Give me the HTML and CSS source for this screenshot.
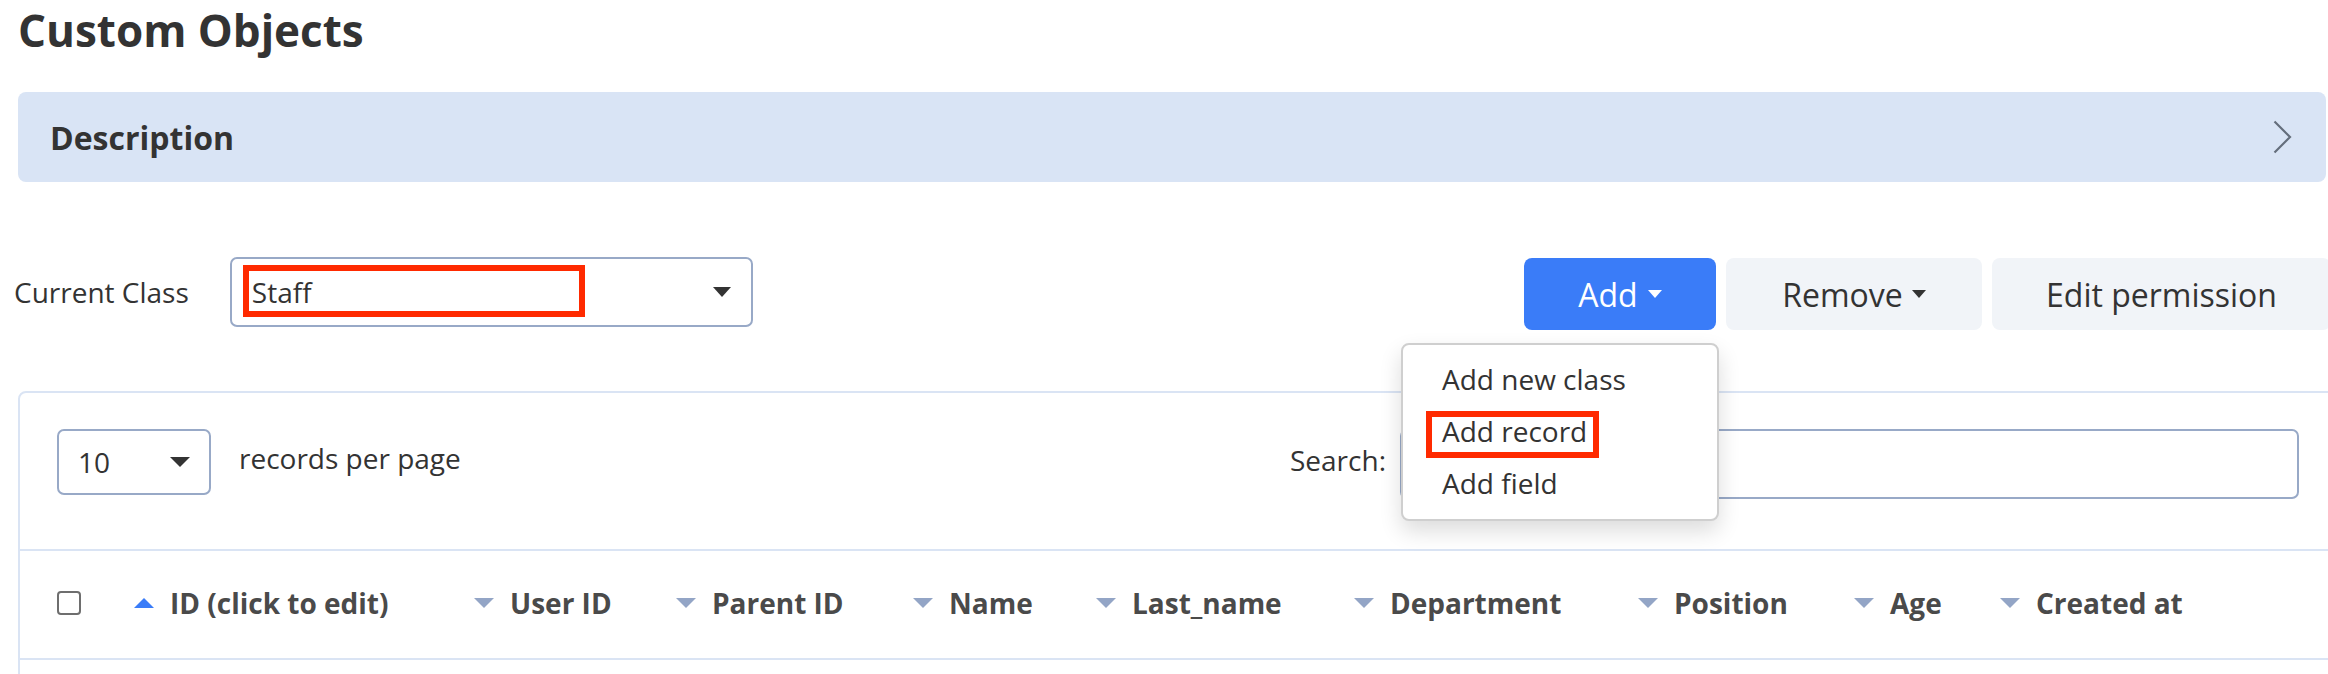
FILE: index.html
```html
<!DOCTYPE html>
<html lang="en">
<head>
<meta charset="utf-8">
<title>Custom Objects</title>
<link rel="stylesheet" href="styles.css">
</head>
<body>
<div class="page">
  <h1 class="title">Custom Objects</h1>

  <div class="desc-bar">
    <span class="desc-title">Description</span>
    <svg class="chev" width="19" height="34" viewBox="0 0 19 34"><polyline points="1.5,1.5 17,17 1.5,32.5" fill="none" stroke="#646e7c" stroke-width="2.2"/></svg>
  </div>

  <div class="toolbar">
    <div class="class-picker">
      <span class="label label-class">Current Class</span>
      <div class="select select-class">
        <span class="select-value">Staff</span>
        <span class="tri tri-class"></span>
        <span class="annot annot-staff"></span>
      </div>
    </div>
    <div class="actions">
      <div class="dropdown">
        <button class="btn btn-primary btn-add">Add<span class="btn-caret caret-light"></span></button>
        <div class="menu">
          <div class="menu-item">Add new class</div>
          <div class="menu-item">Add record<span class="annot annot-record"></span></div>
          <div class="menu-item">Add field</div>
        </div>
      </div>
      <button class="btn btn-light btn-remove">Remove<span class="btn-caret caret-dark"></span></button>
      <button class="btn btn-light btn-edit">Edit permission</button>
    </div>
  </div>

  <div class="card">
    <div class="card-controls">
      <div class="length">
        <div class="select select-len">
          <span class="select-value">10</span>
          <span class="tri tri-len"></span>
        </div>
        <span class="label label-len">records per page</span>
      </div>
      <div class="search">
        <span class="label label-search">Search:</span>
        <div class="search-input"></div>
      </div>
    </div>
    <div class="thead">
      <div class="th th-check"><span class="checkbox"></span></div>
      <div class="th"><span class="sort sort-up"></span>ID (click to edit)</div>
      <div class="th"><span class="sort"></span>User ID</div>
      <div class="th"><span class="sort"></span>Parent ID</div>
      <div class="th"><span class="sort"></span>Name</div>
      <div class="th"><span class="sort"></span>Last_name</div>
      <div class="th"><span class="sort"></span>Department</div>
      <div class="th"><span class="sort"></span>Position</div>
      <div class="th"><span class="sort"></span>Age</div>
      <div class="th"><span class="sort"></span>Created at</div>
    </div>
    <div class="tbody"></div>
  </div>
</div>
</body>
</html>
```

FILE: styles.css
```css
* { box-sizing: border-box; }

html, body {
  margin: 0;
  padding: 0;
  background: #ffffff;
  overflow: hidden;
}

body {
  font-family: "Open Sans", "Noto Sans", "Liberation Sans", sans-serif;
  color: #333333;
}

.page {
  width: 2337px;
  padding-left: 18px;
}

.title {
  margin: 0;
  font-size: 44px;
  line-height: 60px;
  font-weight: 700;
  color: #333333;
}

.desc-bar {
  margin-top: 32px;
  margin-right: 11px;
  height: 90px;
  background: #d9e4f5;
  border-radius: 8px;
  display: flex;
  align-items: center;
  justify-content: space-between;
  padding: 0 34px 0 32px;
}

.desc-title {
  font-size: 32px;
  font-weight: 700;
  color: #333333;
}

.chev { display: block; }

.toolbar {
  margin-top: 75px;
  display: flex;
  justify-content: space-between;
  align-items: flex-start;
}

.class-picker {
  display: flex;
  align-items: center;
  height: 70px;
}

.label {
  font-size: 28px;
  color: #333333;
  white-space: nowrap;
}

.label-class {
  margin-left: -4px;
  margin-right: 41px;
}

.select {
  position: relative;
  display: flex;
  align-items: center;
  justify-content: space-between;
  border: 2px solid #98a9c7;
  border-radius: 7px;
  background: #ffffff;
  font-size: 28px;
  color: #333333;
}

.select-class {
  width: 523px;
  height: 70px;
  padding: 0 20px 0 20px;
}

.select-len {
  width: 154px;
  height: 66px;
  padding: 0 19px 0 19px;
}

.tri {
  width: 0;
  height: 0;
  border-left: 9px solid transparent;
  border-right: 9px solid transparent;
  border-top: 10px solid #333333;
}

.tri-len {
  border-left-width: 10px;
  border-right-width: 10px;
}

.annot {
  position: absolute;
  border: 6px solid #ff2a00;
  pointer-events: none;
}

.annot-staff {
  left: 11px;
  top: 6px;
  width: 342px;
  height: 52px;
}

.actions {
  display: flex;
  gap: 10px;
  margin-top: 1px;
  margin-right: 6px;
}

.dropdown {
  position: relative;
}

.btn {
  height: 72px;
  padding: 0;
  border: none;
  border-radius: 8px;
  font-family: "Open Sans", "Noto Sans", "Liberation Sans", sans-serif;
  font-size: 32px;
  display: flex;
  align-items: center;
  justify-content: center;
  white-space: nowrap;
}

.btn-add { width: 192px; }
.btn-remove { width: 256px; }
.btn-edit { width: 339px; }

.btn-primary {
  background: #3a7cf8;
  color: #ffffff;
}

.btn-light {
  background: #f1f4f8;
  color: #333333;
}

.btn-caret {
  margin-left: 10px;
  width: 0;
  height: 0;
  border-left: 7.5px solid transparent;
  border-right: 7.5px solid transparent;
  border-top: 8px solid #ffffff;
}

.caret-dark { border-top-color: #333333; margin-left: 9px; }

.menu {
  position: absolute;
  top: calc(100% + 13px);
  right: -3px;
  width: 318px;
  padding: 8px 0 10px 0;
  border: 2px solid #cfcfcf;
  border-radius: 8px;
  background: #ffffff;
  box-shadow: 0 10px 22px rgba(0, 0, 0, 0.14);
  z-index: 10;
}

.menu-item {
  position: relative;
  height: 52px;
  line-height: 52px;
  padding-left: 39px;
  font-size: 28px;
  color: #333333;
  white-space: nowrap;
}

.annot-record {
  left: 23px;
  top: 6px;
  width: 173px;
  height: 47px;
}

.card {
  margin-top: 61px;
  border: 2px solid #dae4f4;
  border-radius: 8px;
}

.card-controls {
  display: flex;
  justify-content: space-between;
  align-items: flex-start;
  padding: 36px 36px 50px 37px;
}

.length {
  display: flex;
  align-items: center;
  height: 66px;
}

.label-len {
  margin-left: 28px;
  padding-bottom: 8px;
}

.search {
  display: flex;
  align-items: center;
  height: 70px;
}

.label-search {
  margin-right: 14px;
  padding-bottom: 8px;
}

.search-input {
  width: 899px;
  height: 70px;
  border: 2px solid #98a9c7;
  border-radius: 7px;
}

.thead {
  display: grid;
  grid-template-columns: 77px 340px 202px 237px 183px 258px 284px 216px 146px 1fr;
  align-items: center;
  height: 111px;
  padding: 0 0 3px 37px;
  border-top: 2px solid #dae4f4;
  border-bottom: 2px solid #dae4f4;
}

.th {
  display: flex;
  align-items: center;
  font-size: 28px;
  font-weight: 700;
  color: #4a4a4a;
  white-space: nowrap;
}

.checkbox {
  width: 24px;
  height: 24px;
  border: 2px solid #6e6e6e;
  border-radius: 4px;
}

.sort {
  width: 0;
  height: 0;
  margin-right: 16px;
  border-left: 10px solid transparent;
  border-right: 10px solid transparent;
  border-top: 10px solid #93a5c6;
}

.sort-up {
  border-top: none;
  border-bottom: 10px solid #3a7cf8;
  margin-right: 16px;
}

.tbody {
  height: 80px;
}
```
